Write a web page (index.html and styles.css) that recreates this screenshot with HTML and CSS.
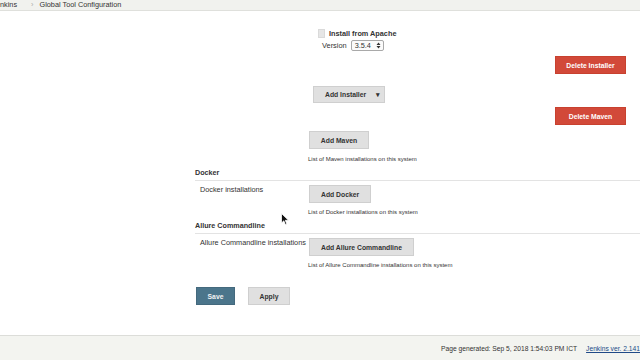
FILE: index.html
```html
<!DOCTYPE html>
<html lang="en">
<head>
<meta charset="UTF-8" />
<title>Global Tool Configuration [Jenkins]</title>
<link rel="stylesheet" href="styles.css">
</head>
<body>

<div class="breadcrumbs">
<a class="crumb crumb-first" href="#">Jenkins</a>
<span class="crumb-sep">›</span>
<a class="crumb" href="#">Global Tool Configuration</a>
</div>

<div class="main">

<div class="installer">
<div class="inst-title">
<span class="checkbox"></span>
<b>Install from Apache</b>
</div>
<div class="inst-version">
<span>Version</span>
<span class="select">3.5.4
<svg width="5" height="7" viewBox="0 0 5 7"><path d="M0.5 3 L2.5 0.5 L4.5 3 Z M0.5 4 L2.5 6.5 L4.5 4 Z" fill="#333"/></svg>
</span>
</div>
</div>

<div class="row-end row-del-inst">
<button class="btn btn-red">Delete Installer</button>
</div>

<div class="row-add-inst">
<button class="btn btn-menu">Add Installer <span class="caret">▾</span></button>
</div>

<div class="row-end row-del-maven">
<button class="btn btn-red">Delete Maven</button>
</div>

<div class="row-add add-maven">
<button class="btn">Add Maven</button>
</div>
<div class="help">List of Maven installations on this system</div>

<div class="section">Docker</div>
<div class="setting">
<div class="setting-name">Docker installations</div>
<div><button class="btn">Add Docker</button></div>
</div>
<div class="help">List of Docker installations on this system</div>

<div class="section">Allure Commandline</div>
<div class="setting">
<div class="setting-name">Allure Commandline installations</div>
<div><button class="btn">Add Allure Commandline</button></div>
</div>
<div class="help">List of Allure Commandline installations on this system</div>

<div class="bottom-buttons">
<button class="btn btn-save">Save</button>
<button class="btn btn-apply">Apply</button>
</div>

</div>

<footer class="footer">
<span>Page generated: Sep 5, 2018 1:54:03 PM ICT</span>
<a href="#">Jenkins ver. 2.141</a>
</footer>

<svg class="cursor" width="9" height="13" viewBox="0 0 9 13">
<path d="M0.5 0.5 L0.5 10 L2.8 7.8 L4.4 11.6 L5.8 11 L4.3 7.3 L7.5 7.3 Z" fill="#111" stroke="#fff" stroke-width="0.8"/>
</svg>

</body>
</html>
```

FILE: styles.css
```css
* {
box-sizing: border-box;
}

body {
margin: 0;
height: 100vh;
display: flex;
flex-direction: column;
overflow: hidden;
background: #fff;
color: #333;
font-family: "Liberation Sans", Arial, sans-serif;
font-size: 7.4px;
position: relative;
}

a {
color: #333;
text-decoration: none;
}

.breadcrumbs {
height: 11px;
display: flex;
align-items: center;
background: #f1f2ee;
border-bottom: 1px solid #dfe0dc;
font-size: 7.3px;
white-space: nowrap;
overflow: hidden;
padding-bottom: 1px;
}

.crumb-first {
margin-left: -7.7px;
}

.crumb-sep {
color: #aaa;
margin: 0 6px 0 14px;
}

.main {
flex: 1;
padding-left: 195px;
}

.installer {
padding-left: 123px;
padding-top: 17px;
}

.inst-title {
height: 10px;
display: flex;
align-items: center;
gap: 4px;
font-size: 7.3px;
}

.checkbox {
width: 7px;
height: 9px;
background: #e6e6e6;
border: 1px solid #dadada;
}

.inst-version {
margin-top: 2px;
height: 11px;
display: flex;
align-items: center;
gap: 4px;
padding-left: 4px;
}

.select {
width: 33px;
height: 11px;
border: 1px solid #a9a9a9;
border-radius: 2px;
background: #fbfbfb;
display: flex;
align-items: center;
justify-content: space-between;
padding: 0 2px 0 3px;
font-size: 7.3px;
}

.btn {
height: 18px;
border: 1px solid #cfcfcf;
background: #e0e0e0;
color: #333;
font-family: inherit;
font-weight: bold;
font-size: 6.8px;
padding: 0 10px;
margin: 0;
cursor: pointer;
}

.btn-red {
width: 71px;
background: #d24939;
border-color: #c8412f;
color: #fff;
}

.row-end {
display: flex;
justify-content: flex-end;
padding-right: 14px;
}

.row-del-inst {
margin-top: 5px;
}

.row-add-inst {
margin-top: 12px;
padding-left: 118px;
}

.btn-menu {
width: 72px;
height: 17px;
padding: 0 0 0 11px;
text-align: left;
}

.caret {
margin-left: 8px;
font-size: 7px;
}

.row-del-maven {
margin-top: 4px;
}

.row-add {
margin-top: 6px;
padding-left: 114px;
}

.add-maven .btn {
width: 60px;
}

.help {
margin-top: 6px;
padding-left: 113px;
height: 8px;
line-height: 8px;
font-size: 6px;
}

.section {
margin-top: 5px;
height: 13px;
line-height: 10px;
padding-bottom: 2px;
border-bottom: 1px solid #e3e3e3;
font-weight: bold;
font-size: 7.2px;
}

.setting {
margin-top: 4px;
display: grid;
grid-template-columns: 114px 1fr;
}

.setting-name {
padding-left: 5px;
line-height: 9px;
font-size: 7.3px;
}

.setting + .help {
margin-top: 5px;
}

.setting .btn {
padding: 0 11px;
}

.bottom-buttons {
margin-top: 18px;
display: flex;
gap: 13px;
padding-left: 1px;
}

.btn-save {
width: 39px;
background: #4b758b;
border-color: #44697d;
color: #f2f2f2;
}

.btn-apply {
width: 42px;
}

.footer {
height: 25px;
border-top: 1px solid #dcddd9;
background: #f3f4f0;
display: flex;
align-items: center;
padding-left: 441px;
white-space: nowrap;
overflow: hidden;
font-size: 6.7px;
}

.footer a {
margin-left: 9px;
color: #204a87;
text-decoration: underline;
}

.cursor {
position: absolute;
left: 281px;
top: 213px;
}
```
